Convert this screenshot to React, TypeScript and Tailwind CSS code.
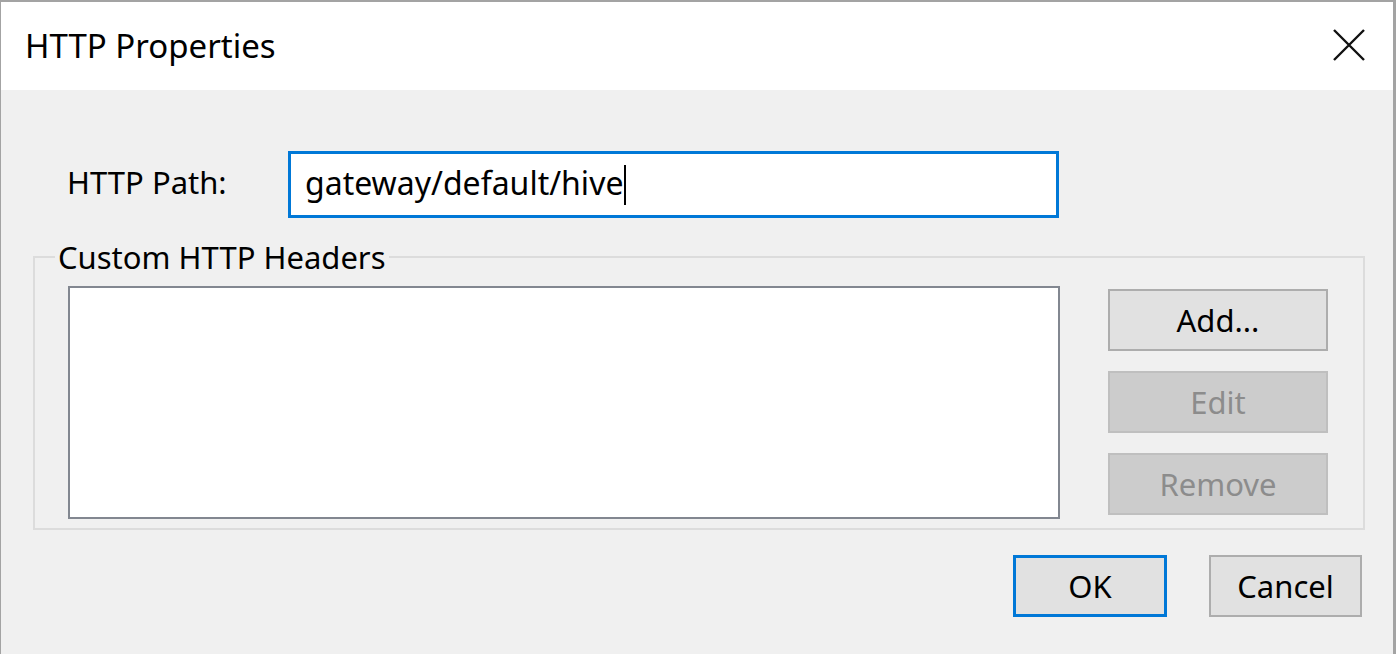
import React from 'react';

const font = { fontFamily: '"Noto Sans", "Open Sans", sans-serif' };

function Button({ label, disabled, focused }: { label: string; disabled?: boolean; focused?: boolean }) {
  const base = 'flex items-center justify-center text-[31px] leading-none';
  if (disabled) {
    return (
      <div className={`${base} w-[220px] h-[62px] bg-[#cccccc] border-2 border-[#bfbfbf] text-[#8c8c8c]`}>
        {label}
      </div>
    );
  }
  return (
    <div
      className={`${base} h-[62px] bg-[#e1e1e1] text-black ${
        focused ? 'border-[3px] border-[#0078d7]' : 'border-2 border-[#adadad]'
      }`}
    >
      {label}
    </div>
  );
}

export default function App() {
  return (
    <div className="w-[1400px] h-[658px] bg-white overflow-hidden" style={font}>
      <div className="w-[1396px] h-[654px] flex flex-col bg-[#f0f0f0] border-t-2 border-l border-r-[3px] border-[#a3a3a3]">
        {/* title bar */}
        <div className="h-[88px] bg-white flex items-center justify-between pl-[24px] pr-[27px]">
          <span className="text-[33px] text-black leading-none -mt-[2px]">HTTP Properties</span>
          <svg width="34" height="34" viewBox="0 0 34 34" className="-mt-[2px]">
            <path d="M2 2 L32 32 M32 2 L2 32" stroke="#111" strokeWidth="2.4" fill="none" />
          </svg>
        </div>

        {/* body */}
        <div className="flex flex-col pl-[32px] pr-[28px]">
          <div className="flex items-center mt-[61px] ml-[34px]">
            <span className="w-[221px] text-[31px] text-black leading-none -mt-[4px]">HTTP Path:</span>
            <div className="w-[771px] h-[67px] bg-white border-[3px] border-[#0078d7] flex items-center pl-[14px]">
              <span className="text-[32px] text-black leading-none -mt-[4px]">gateway/default/hive</span>
              <span className="w-[2px] h-[40px] bg-black ml-[1px]" />
            </div>
          </div>

          <fieldset className="mt-[19px] border-2 border-[#dcdcdc] pl-[33px] pr-[34px] pt-[9px] pb-[9px]">
            <legend className="-ml-[13px] px-[3px] text-[31px] text-black leading-[40px]">Custom HTTP Headers</legend>
            <div className="flex">
              <div className="w-[992px] h-[233px] bg-white border-2 border-[#828790]" />
              <div className="ml-[48px] w-[220px] flex flex-col gap-[20px] pt-[3px]">
                <Button label="Add..." />
                <Button label="Edit" disabled />
                <Button label="Remove" disabled />
              </div>
            </div>
          </fieldset>

          <div className="flex justify-end mt-[25px] mr-[3px] gap-[42px]">
            <div className="w-[154px]">
              <Button label="OK" focused />
            </div>
            <div className="w-[153px]">
              <Button label="Cancel" />
            </div>
          </div>
        </div>
      </div>
    </div>
  );
}
